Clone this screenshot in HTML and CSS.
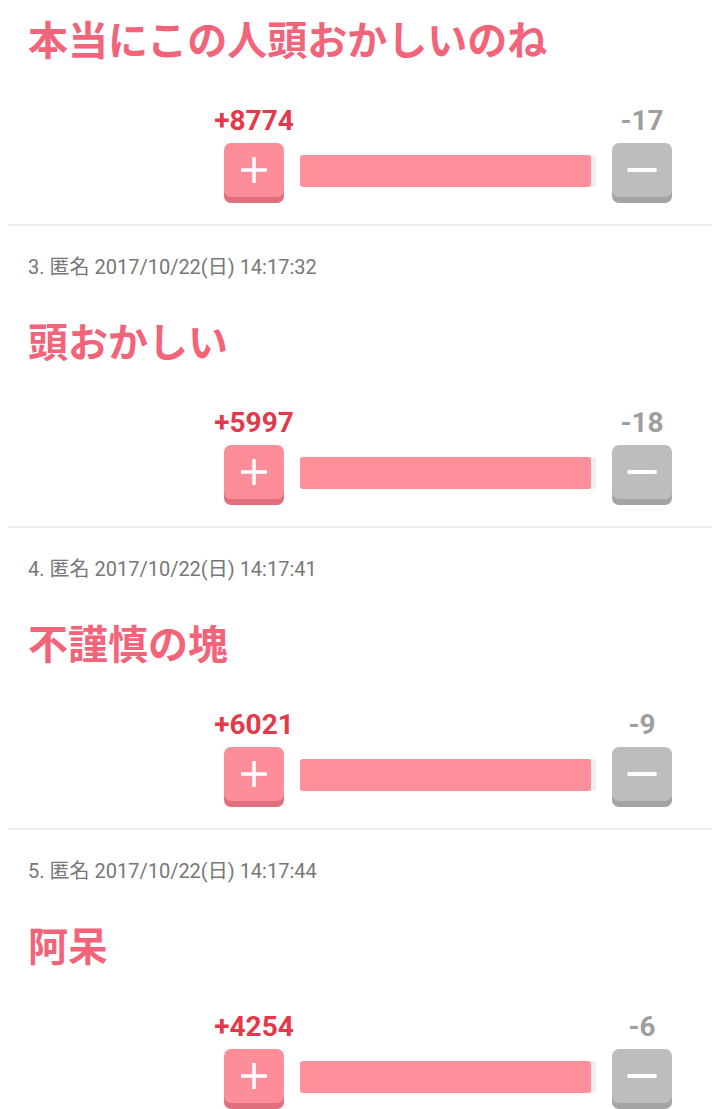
FILE: index.html
```html
<!DOCTYPE html>
<html>
    <head>
        <meta charset="utf-8">
        <title>コメント</title>
        <link rel="stylesheet" href="styles.css">
    </head>
    <body>
        <div id="comments">

            <div class="entry first">
                <h2 class="body">本当にこの人頭おかしいのね</h2>
                <div class="counts">
                    <span class="plus-count">+8774</span>
                    <span></span>
                    <span class="minus-count">-17</span>
                </div>
                <div class="vote">
                    <button class="btn btn-plus"><svg width="30" height="30" viewBox="0 0 30 30"><path d="M15 2v26M2 15h26" stroke="#fff" stroke-width="3.5"/></svg></button>
                    <div class="track"><div class="fill" style="width: 98.3%"></div></div>
                    <button class="btn btn-minus"><svg width="30" height="30" viewBox="0 0 30 30"><path d="M2 15h26" stroke="#fff" stroke-width="4" stroke-linecap="round"/></svg></button>
                </div>
            </div>

            <div class="entry">
                <p class="meta">3. 匿名 2017/10/22(日) 14:17:32</p>
                <h2 class="body">頭おかしい</h2>
                <div class="counts">
                    <span class="plus-count">+5997</span>
                    <span></span>
                    <span class="minus-count">-18</span>
                </div>
                <div class="vote">
                    <button class="btn btn-plus"><svg width="30" height="30" viewBox="0 0 30 30"><path d="M15 2v26M2 15h26" stroke="#fff" stroke-width="3.5"/></svg></button>
                    <div class="track"><div class="fill" style="width: 98.3%"></div></div>
                    <button class="btn btn-minus"><svg width="30" height="30" viewBox="0 0 30 30"><path d="M2 15h26" stroke="#fff" stroke-width="4" stroke-linecap="round"/></svg></button>
                </div>
            </div>

            <div class="entry">
                <p class="meta">4. 匿名 2017/10/22(日) 14:17:41</p>
                <h2 class="body">不謹慎の塊</h2>
                <div class="counts">
                    <span class="plus-count">+6021</span>
                    <span></span>
                    <span class="minus-count">-9</span>
                </div>
                <div class="vote">
                    <button class="btn btn-plus"><svg width="30" height="30" viewBox="0 0 30 30"><path d="M15 2v26M2 15h26" stroke="#fff" stroke-width="3.5"/></svg></button>
                    <div class="track"><div class="fill" style="width: 98.3%"></div></div>
                    <button class="btn btn-minus"><svg width="30" height="30" viewBox="0 0 30 30"><path d="M2 15h26" stroke="#fff" stroke-width="4" stroke-linecap="round"/></svg></button>
                </div>
            </div>

            <div class="entry">
                <p class="meta">5. 匿名 2017/10/22(日) 14:17:44</p>
                <h2 class="body">阿呆</h2>
                <div class="counts">
                    <span class="plus-count">+4254</span>
                    <span></span>
                    <span class="minus-count">-6</span>
                </div>
                <div class="vote">
                    <button class="btn btn-plus"><svg width="30" height="30" viewBox="0 0 30 30"><path d="M15 2v26M2 15h26" stroke="#fff" stroke-width="3.5"/></svg></button>
                    <div class="track"><div class="fill" style="width: 98.3%"></div></div>
                    <button class="btn btn-minus"><svg width="30" height="30" viewBox="0 0 30 30"><path d="M2 15h26" stroke="#fff" stroke-width="4" stroke-linecap="round"/></svg></button>
                </div>
            </div>

        </div><!-- comments -->
    </body>
</html>
```

FILE: styles.css
```css
body, h2, p {
    margin: 0;
    padding: 0;
}

body {
    background: #ffffff;
    font-family: Roboto, "Noto Sans CJK JP", sans-serif;
    overflow: hidden;
}

#comments {
    padding: 0 8px;
}

.entry {
    border-top: 2px solid #eeeeee;
    padding: 29px 0 27px 0;
}

.entry.first {
    border-top: none;
    padding-top: 14px;
}

.meta {
    padding-left: 20px;
    font-size: 20px;
    line-height: 24px;
    color: #777777;
}

.body {
    padding-left: 20px;
    margin-top: 37px;
    font-family: "Noto Sans CJK JP", sans-serif;
    font-size: 40px;
    line-height: 48px;
    font-weight: 700;
    color: #f26479;
}

.entry.first .body {
    margin-top: 0;
}

.counts, .vote {
    display: grid;
    grid-template-columns: 60px 1fr 60px;
    column-gap: 16px;
    width: 448px;
    margin-left: 216px;
}

.counts {
    margin-top: 44px;
    font-size: 28px;
    line-height: 30px;
    font-weight: 700;
}

.plus-count, .minus-count {
    display: flex;
    justify-content: center;
    white-space: nowrap;
}

.plus-count {
    color: #e3394a;
}

.minus-count {
    color: #9e9e9e;
}

.vote {
    margin-top: 7px;
    align-items: center;
}

.btn {
    display: flex;
    align-items: center;
    justify-content: center;
    width: 60px;
    height: 54px;
    border: none;
    border-radius: 7px;
    padding: 0;
}

.btn-plus {
    background: #fd8d99;
    box-shadow: 0 6px 0 #e0707e;
}

.btn-minus {
    background: #bdbdbd;
    box-shadow: 0 6px 0 #a4a4a4;
}

.track {
    height: 32px;
    background: #eeeeee;
    border-radius: 3px;
    margin-top: 2px;
}

.fill {
    height: 100%;
    background: #fd8f9b;
    border-radius: 3px;
}
```
